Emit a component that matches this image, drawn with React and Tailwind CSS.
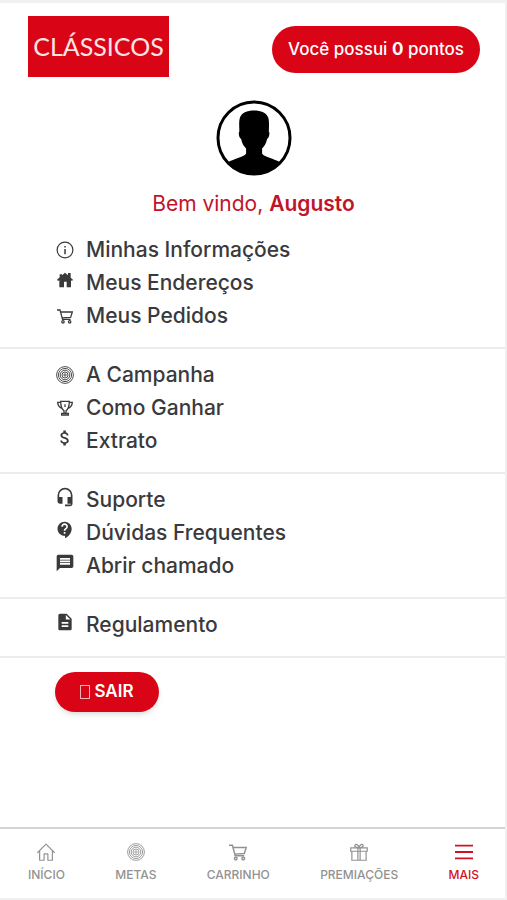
import { MdHeadsetMic, MdContactSupport, MdMessage, MdDescription, MdAttachMoney } from 'react-icons/md';

function InfoIcon({ className }) {
    return (
        <svg viewBox="0 0 24 24" className={className} fill="none" stroke="currentColor" strokeWidth="1.6" aria-hidden="true">
            <circle cx="12" cy="12" r="10.5" />
            <path d="M12 10.5v7" strokeWidth="2" />
            <path d="M12 6.5v2" strokeWidth="2" />
        </svg>
    );
}

function HouseIcon({ className }) {
    return (
        <svg viewBox="0 0 24 24" className={className} fill="currentColor" aria-hidden="true">
            <path d="M12 1 L16.5 5 V1.5 H20.5 V8.5 L24 11.5 L22.5 13.5 L21 12.3 V23 H14.5 V14.5 H10.5 V23 H3.5 V12.3 L1.5 13.5 L0 11.5 L4 8 V3.5 H7.5 V5 Z" />
        </svg>
    );
}

function CartIcon({ className }) {
    return (
        <svg viewBox="0 0 24 24" className={className} fill="none" stroke="currentColor" strokeWidth="1.9" aria-hidden="true">
            <path d="M0 3h4.5l3.8 14h12" />
            <path d="M5.3 6H23l-2.6 8-12.8.8" />
            <circle cx="9" cy="20.8" r="1.8" />
            <circle cx="19" cy="20.8" r="1.8" />
        </svg>
    );
}

function TargetIcon({ className }) {
    return (
        <svg viewBox="0 0 24 24" className={className} fill="none" stroke="currentColor" strokeWidth="1.2" aria-hidden="true">
            <circle cx="12" cy="12" r="11.2" />
            <circle cx="12" cy="12" r="8.8" />
            <circle cx="12" cy="12" r="6.4" />
            <circle cx="12" cy="12" r="4" />
            <circle cx="12" cy="12" r="1.5" />
        </svg>
    );
}

function TrophyIcon({ className }) {
    return (
        <svg viewBox="0 0 24 24" className={className} fill="none" stroke="currentColor" strokeWidth="1.9" aria-hidden="true">
            <path d="M5.5 2h13c0 8-2 12-5 14v4h-3v-4c-3-2-5-6-5-14z" />
            <path d="M5.5 3.5H1c.3 4.5 2.5 7.5 6.5 9" />
            <path d="M18.5 3.5H23c-.3 4.5-2.5 7.5-6.5 9" />
            <path d="M12 6.5v4M7 22.5v-2.5h10v2.5z" />
        </svg>
    );
}

function HomeIcon({ className }) {
    return (
        <svg viewBox="0 0 24 24" className={className} fill="none" stroke="currentColor" strokeWidth="1.6" strokeLinejoin="round" aria-hidden="true">
            <path d="M.5 13 12 1.500 23.500 13" />
            <path d="M3.500 10.500V23H9.500V14.500h5V23H20.500V10.500" />
        </svg>
    );
}

function GiftIcon({ className }) {
    return (
        <svg viewBox="0 0 24 24" className={className} fill="none" stroke="currentColor" strokeWidth="1.6" aria-hidden="true">
            <path d="M1 6.500h22V11H1zM2.500 11v12h19V11M10.500 6.500v16M13.500 6.500v16" />
            <path d="M12 6.500C9 6.500 5.500 5 6.500 3s4.500-1.500 5.500 3.500c1-5 4.500-5.500 5.500-3.500s-2.500 3.500-5.500 3.500z" />
        </svg>
    );
}

function MenuIcon({ className }) {
    return (
        <svg viewBox="0 0 24 24" className={className} fill="none" stroke="currentColor" strokeWidth="2.4" aria-hidden="true">
            <path d="M0 3.500h24M0 12h24M0 20.500h24" />
        </svg>
    );
}

function Avatar() {
    return (
        <svg viewBox="0 0 76 76" className="size-[76px]" role="img" aria-label="Foto de perfil">
            <defs>
                <clipPath id="avatar-clip">
                    <circle cx="38" cy="38" r="37" />
                </clipPath>
            </defs>
            <circle cx="38" cy="38" r="36" fill="#fff" stroke="#000" strokeWidth="3" />
            <path
                clipPath="url(#avatar-clip)"
                d="M38 10.500c-7 0-12.500 2.500-14 7-1.200 3.500-.8 9-.6 14-1.200.8-.6 6.500 1.700 7.500.8 4.500 3 7.500 5 9.500v5c-1.500 3.500-12 5-18.500 9V80h53V62.500c-6.500-4-17-5.500-18.500-9v-5c2-2 4.200-5 5-9.500 2.300-1 2.900-6.700 1.700-7.500.2-5 .6-10.500-.6-14-1.500-4.500-7.200-7-14.200-7z"
            />
        </svg>
    );
}

const groups = [
    [
        { label: 'Minhas Informações', icon: InfoIcon, size: 'size-[18px]' },
        { label: 'Meus Endereços', icon: HouseIcon, size: 'size-4', raised: true },
        { label: 'Meus Pedidos', icon: CartIcon, size: 'size-4' },
    ],
    [
        { label: 'A Campanha', icon: TargetIcon, size: 'size-[18px]' },
        { label: 'Como Ganhar', icon: TrophyIcon, size: 'size-4' },
        { label: 'Extrato', icon: MdAttachMoney, size: 'size-5', raised: true },
    ],
    [
        { label: 'Suporte', icon: MdHeadsetMic, size: 'size-5', raised: true },
        { label: 'Dúvidas Frequentes', icon: MdContactSupport, size: 'size-5', raised: true },
        { label: 'Abrir chamado', icon: MdMessage, size: 'size-5', raised: true },
    ],
    [{ label: 'Regulamento', icon: MdDescription, size: 'size-5', raised: true }],
];

const tabs = [
    { label: 'INÍCIO', icon: HomeIcon },
    { label: 'METAS', icon: TargetIcon },
    { label: 'CARRINHO', icon: CartIcon },
    { label: 'PREMIAÇÕES', icon: GiftIcon },
    { label: 'MAIS', icon: MenuIcon, active: true },
];

export default function App() {
    return (
        <div className="min-h-screen flex flex-col bg-white border-t-3 border-r-2 border-[#f0f0f0] font-[Inter,sans-serif] text-[#3a3a3c]">
            <header className="flex items-start justify-between pt-[13px] pl-7 pr-[25px]">
                <a href="#" className="flex items-center justify-center w-[141px] h-[61px] bg-[#d90416] text-[#fde4e4] text-[25px] font-[Lato,sans-serif]">
                    CLÁSSICOS
                </a>
                <button type="button" className="mt-2.5 h-[47px] px-4 rounded-full bg-[#d90416] text-white text-[17px] font-medium cursor-pointer">
                    Você possui <b className="font-bold">0</b> pontos
                </button>
            </header>

            <main className="flex-1">
                <div className="flex flex-col items-center pt-[23px] pl-0.5">
                    <Avatar />
                    <p className="mt-3 text-[21px] leading-8 text-[#c0142a]">
                        Bem vindo, <strong className="font-semibold">Augusto</strong>
                    </p>
                </div>

                {/* Menu */}
                <nav className="pt-1">
                    {groups.map((items, i) => (
                        <ul key={i} className="pt-[9px] pb-[15px] border-b-2 border-[#ececec]">
                            {items.map(({ label, icon: Icon, size, raised }) => (
                                <li key={label}>
                                    <a href="#" className="flex items-center gap-2.5 pl-[54px] text-[21px] leading-[33px] font-medium">
                                        <span className={`flex justify-center w-[22px] ${raised ? 'pb-1.5' : ''}`}>
                                            <Icon className={size} />
                                        </span>
                                        {label}
                                    </a>
                                </li>
                            ))}
                        </ul>
                    ))}
                </nav>

                <button type="button" className="flex items-center justify-center gap-1 mt-3.5 ml-[55px] mb-6 w-[104px] h-10 rounded-full bg-[#d90416] shadow-md text-white text-[17px] font-semibold cursor-pointer">
                    <span className="w-2.5 h-3.5 border border-white/70" />
                    SAIR
                </button>
            </main>

            {/* Bottom tabs */}
            <nav className="sticky bottom-0 flex justify-between pt-3.5 pb-[13px] pl-7 pr-[26px] bg-white border-t-2 border-t-[#d4d4d4] border-b-2 border-b-[#f0f0f0]">
                {tabs.map(({ label, icon: Icon, active }) => (
                    <a key={label} href="#" className={`flex flex-col items-center gap-1 text-xs leading-5 font-medium ${active ? 'text-[#cf1226]' : 'text-[#929292]'}`}>
                        <Icon className="size-[18px]" />
                        {label}
                    </a>
                ))}
            </nav>
        </div>
    );
}
